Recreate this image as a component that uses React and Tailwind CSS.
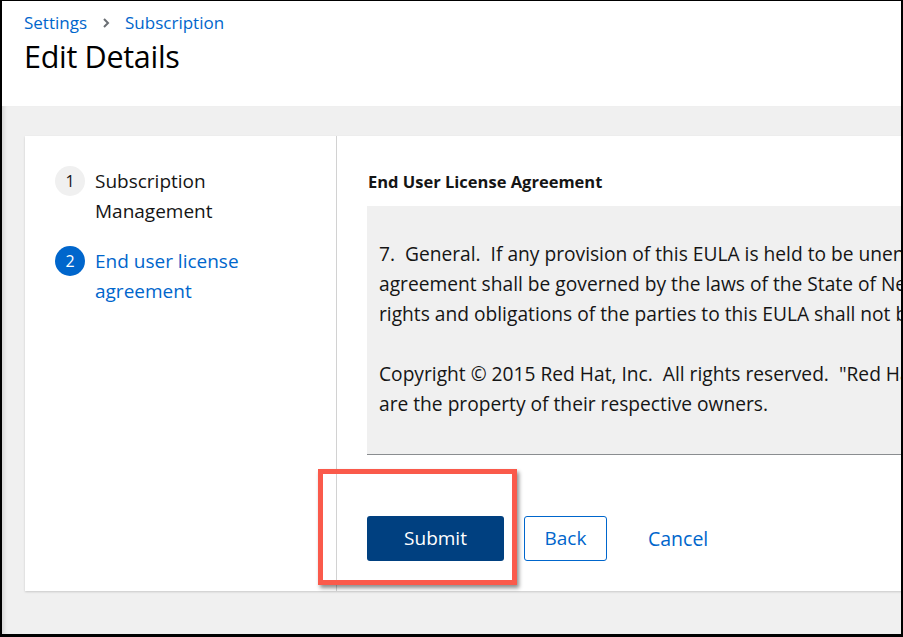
export default function App() {
  const font = { fontFamily: '"Open Sans", "Noto Sans", sans-serif' };
  return (
    <div
      className="relative w-[903px] h-[637px] overflow-hidden border-t border-l-2 border-r-2 border-b-[3px] border-black bg-[#f0f0f0] flex flex-col text-[#151515]"
      style={font}
    >
      <header className="bg-white h-[105px] shrink-0 pl-[22px] pt-[9px]">
        <nav className="flex items-center h-[26px] text-[17px] text-[#0066cc]">
          <span>Settings</span>
          <svg className="mx-[15px]" width="8" height="10" viewBox="0 0 8 10">
            <path d="M2 1 L6 5 L2 9" fill="none" stroke="#6a6e73" strokeWidth="2" />
          </svg>
          <span>Subscription</span>
        </nav>
        <h1 className="mt-[1px] text-[30.5px] leading-[38px] font-medium tracking-[-0.3px] text-black">
          Edit Details
        </h1>
      </header>
      <main className="flex-1 pl-[23px] pt-[30px] shadow-[inset_5px_0_4px_-3px_rgba(0,0,0,0.12)]">
        <div className="bg-white flex h-[455px] w-[1100px] shadow-[0_1px_2px_rgba(0,0,0,0.16)]">
          <div className="w-[312px] shrink-0 border-r border-[#d2d2d2] pl-[30px] pt-[30px] flex flex-col gap-[20px]">
            <div className="flex gap-[10px]">
              <div className="w-[30px] h-[30px] rounded-full bg-[#f0f0f0] flex items-center justify-center text-[16px] text-[#151515] shrink-0">
                1
              </div>
              <div className="text-[19px] leading-[30px] text-[#151515]">
                Subscription
                <br />
                Management
              </div>
            </div>
            <div className="flex gap-[10px]">
              <div className="w-[30px] h-[30px] rounded-full bg-[#0066cc] flex items-center justify-center text-[16px] text-white shrink-0">
                2
              </div>
              <div className="text-[19px] leading-[30px] text-[#0066cc]">
                End user license
                <br />
                agreement
              </div>
            </div>
          </div>
          <div className="flex-1 pl-[30px] pt-[34px]">
            <div className="ml-[1px] text-[16.5px] leading-[24px] font-bold text-[#151515]">
              End User License Agreement
            </div>
            <div className="mt-[12px] h-[249px] bg-[#f0f0f0] border-b border-[#8a8d90] pl-[12px] pt-[33px] text-[19.2px] leading-[30px] text-[#151515] whitespace-pre">
              <div>7.  General.  If any provision of this EULA is held to be unenforceable, the enforceability of the remaining provisions shall in no way</div>
              <div>agreement shall be governed by the laws of the State of New York and of the United States, without regard to any conflict of laws</div>
              <div>rights and obligations of the parties to this EULA shall not be governed by the United Nations Convention on the International Sale</div>
              <div>&nbsp;</div>
              <div>Copyright © 2015 Red Hat, Inc.  All rights reserved.  "Red Hat" and the Red Hat "Shadowman" logo are registered trademarks</div>
              <div>are the property of their respective owners.</div>
            </div>
            <div className="mt-[61px] flex items-center">
              <button className="w-[137px] h-[45px] rounded-[3px] bg-[#004080] text-white text-[19px]">
                Submit
              </button>
              <button className="ml-[20px] w-[83px] h-[45px] rounded-[3px] border border-[#0066cc] text-[#0066cc] text-[19px]">
                Back
              </button>
              <button className="ml-[21px] h-[45px] px-[20px] text-[#0066cc] text-[19.5px]">
                Cancel
              </button>
            </div>
          </div>
        </div>
      </main>
      <div className="absolute left-[316px] top-[468px] w-[199px] h-[116px] border-[5px] border-[#fa5a4b] shadow-[2px_3px_4px_rgba(0,0,0,0.45)]" />
    </div>
  );
}
